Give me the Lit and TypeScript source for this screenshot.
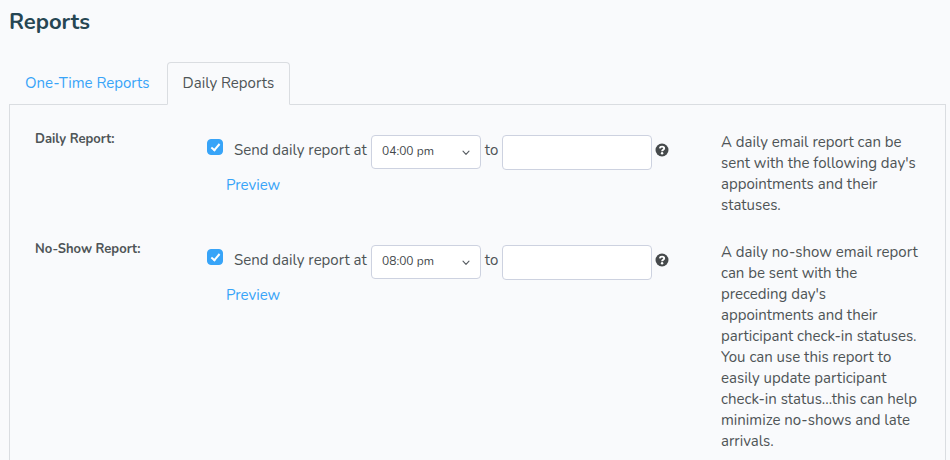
import { LitElement, html, css } from "lit";
import { customElement, property, state } from "lit/decorators.js";

const TIMES = ["04:00 pm", "05:00 pm", "06:00 pm", "07:00 pm", "08:00 pm", "09:00 pm"];

@customElement("report-row")
class ReportRow extends LitElement {
  @property() label = "";
  @property() time = "";
  @property() description = "";

  static styles = css`
    :host {
      display: grid;
      grid-template-columns: 172fr 514fr 200fr;
      color: #4e5456;
      font-size: 15px;
      line-height: 21px;
    }
    .name {
      margin: 0;
      font-size: 13px;
      font-weight: 700;
      line-height: 20px;
    }
    .line {
      display: flex;
      align-items: center;
      height: 36px;
      margin-top: 5px;
      white-space: nowrap;
    }
    .toggle {
      display: flex;
      align-items: center;
      gap: 11px;
      width: 164px;
      padding-bottom: 4px;
      flex: none;
    }
    .check {
      appearance: none;
      flex: none;
      display: grid;
      place-items: center;
      width: 16px;
      height: 16px;
      margin: 0 0 6px;
      border: 1px solid #38a4f8;
      border-radius: 4px;
      background: #fff;
    }
    .check:checked {
      background: #38a4f8;
    }
    .check:checked::before {
      content: "";
      width: 3px;
      height: 7px;
      margin-bottom: 2px;
      border: solid #fff;
      border-width: 0 2px 2px 0;
      transform: rotate(40deg);
    }
    .picker {
      display: grid;
      align-items: center;
      flex: none;
      width: 110px;
    }
    .picker > * {
      grid-area: 1 / 1;
    }
    .time,
    .email {
      box-sizing: border-box;
      height: 34px;
      border: 1px solid #cdd2e0;
      border-radius: 4px;
      background: #fff;
      color: #42474a;
      font-family: inherit;
      font-size: 12px;
    }
    .time {
      appearance: none;
      width: 100%;
      margin: 0;
      padding: 0 24px 2px 10px;
    }
    .chevron {
      justify-self: end;
      width: 8px;
      height: 6px;
      margin-right: 11px;
      margin-top: 2px;
      pointer-events: none;
    }
    .to {
      flex: none;
      width: 21px;
      padding-bottom: 4px;
      text-align: center;
    }
    .email {
      width: 150px;
      height: 35px;
      min-width: 0;
      margin: 0;
      padding: 0 10px;
    }
    .help {
      display: flex;
      margin: 0 0 4px 3px;
      padding: 0;
      border: 0;
      background: none;
      color: #45494b;
      cursor: pointer;
    }
    .help svg {
      width: 14px;
      height: 14px;
    }
    .preview {
      display: inline-block;
      margin: 5px 0 0 19px;
      color: #38a4f8;
      text-decoration: none;
    }
    .text {
      margin: 3px 0 0;
    }
  `;

  render() {
    return html`
      <h2 class="name">${this.label}</h2>
      <div>
        <div class="line">
          <label class="toggle"><input class="check" type="checkbox" checked />Send daily report at</label>
          <span class="picker">
            <select class="time" aria-label="${this.label} time">
              ${TIMES.map((t) => html`<option ?selected=${t === this.time}>${t}</option>`)}
            </select>
            <svg class="chevron" viewBox="0 0 8 6" aria-hidden="true">
              <path d="M1 1.2 4 4.4 7 1.2" fill="none" stroke="#555b60" stroke-width="1.1" stroke-linecap="round" stroke-linejoin="round" />
            </svg>
          </span>
          <span class="to">to</span>
          <input class="email" type="text" aria-label="${this.label} recipient" />
          <button class="help" type="button" aria-label="Help">
            <svg viewBox="0 0 14 14" aria-hidden="true">
              <circle cx="7" cy="7" r="6.5" fill="currentColor" />
              <path d="M4.8 5.3C5 4.1 6 3.6 7 3.6c1.300 0 2.200.7 2.200 1.700 0 1.400-2.100 1.400-2.100 2.900" fill="none" stroke="#fff" stroke-width="1.900" />
              <circle cx="7.100" cy="10.300" r="1.200" fill="#fff" />
            </svg>
          </button>
        </div>
        <a class="preview" href="#preview">Preview</a>
      </div>
      <p class="text">${this.description}</p>
    `;
  }
}

@customElement("app-root")
class AppRoot extends LitElement {
  @state() tab = "Daily Reports";

  static styles = css`
    :host {
      display: flex;
      flex-direction: column;
      box-sizing: border-box;
      min-height: 100vh;
      padding: 6px 4px 0 9px;
      background: #f9fafc;
      color: #4e5456;
      font-family: Nunito, Lato, "Liberation Sans", sans-serif;
      font-size: 15px;
      line-height: 21px;
    }
    .title {
      margin: 0;
      color: #264653;
      font-size: 22px;
      font-weight: 700;
      line-height: 32px;
    }
    .tabs {
      display: flex;
      gap: 1px;
      margin-top: 24px;
    }
    .tab {
      box-sizing: border-box;
      height: 43px;
      margin: 0 0 -1px;
      padding: 0 15px;
      border: 1px solid transparent;
      border-radius: 4px 4px 0 0;
      background: none;
      color: #38a4f8;
      font: inherit;
      cursor: pointer;
    }
    .tab[aria-selected="true"] {
      border-color: #dadde1;
      border-bottom-color: #f9fafc;
      background: #f9fafc;
      color: #4e5456;
      z-index: 1;
    }
    .panel {
      display: flex;
      flex: 1;
      flex-direction: column;
      gap: 23px;
      padding: 24px 24px 0 25px;
      border: 1px solid #dadde1;
      border-bottom: 0;
    }
  `;

  render() {
    return html`
      <h1 class="title">Reports</h1>
      <div class="tabs" role="tablist">
        ${["One-Time Reports", "Daily Reports"].map(
          (name) => html`<button
            class="tab"
            role="tab"
            aria-selected=${name === this.tab}
            @click=${() => (this.tab = name)}
          >${name}</button>`
        )}
      </div>
      <div class="panel" role="tabpanel">
        <report-row
          label="Daily Report:"
          time="04:00 pm"
          description="A daily email report can be sent with the following day's appointments and their statuses."
        ></report-row>
        <report-row
          label="No-Show Report:"
          time="08:00 pm"
          description="A daily no-show email report can be sent with the preceding day's appointments and their participant check-in statuses. You can use this report to easily update participant check-in status...this can help minimize no-shows and late arrivals."
        ></report-row>
      </div>
    `;
  }
}
